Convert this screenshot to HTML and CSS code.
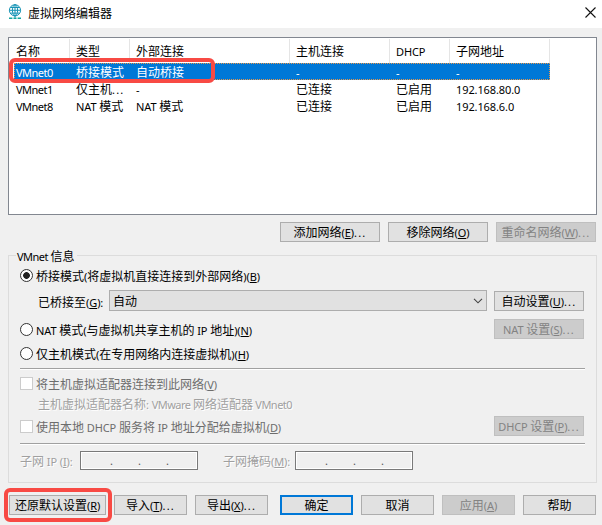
FILE: index.html
```html
<!DOCTYPE html>
<html lang="zh-CN">
<head>
<meta charset="utf-8">
<title>虚拟网络编辑器</title>
<link rel="stylesheet" href="styles.css">
</head>
<body>
<header class="titlebar">
  <svg class="globe" width="14" height="16" viewBox="0 0 14 16" fill="none" stroke="#1593b5" stroke-width="1">
    <circle cx="7" cy="6.3" r="5.6"/><ellipse cx="7" cy="6.3" rx="2.6" ry="5.6"/>
    <path d="M1.4 6.3h11.2M2.3 3.5h9.4M2.3 9.1h9.4M7 .7v13"/>
    <path d="M1 14.3h3.4M5.5 14.3h3M9.6 14.3H13" stroke="#12a6a0" stroke-width="1.4"/>
  </svg>
  <h1>虚拟网络编辑器</h1>
  <svg class="close" width="11" height="11" viewBox="0 0 11 11" stroke="#111" stroke-width="1.1"><path d="M.5.5l10 10M10.5.5l-10 10"/></svg>
</header>
<main>
  <section class="list">
    <div class="row head"><span>名称</span><span>类型</span><span>外部连接</span><span>主机连接</span><span><i>DHCP</i></span><span>子网地址</span></div>
    <div class="row selected"><span><i class="vm">VMnet0</i></span><span>桥接模式</span><span>自动桥接</span><span><i>-</i></span><span><i>-</i></span><span><i>-</i></span></div>
    <div class="row"><span><i class="vm">VMnet1</i></span><span>仅主机<i class="dots">...</i></span><span><i>-</i></span><span>已连接</span><span>已启用</span><span><i>192.168.80.0</i></span></div>
    <div class="row"><span><i class="vm">VMnet8</i></span><span><i>NAT </i>模式</span><span><i>NAT </i>模式</span><span>已连接</span><span>已启用</span><span><i>192.168.6.0</i></span></div>
  </section>
  <div class="list-actions">
    <button>添加网络<i>(<u>E</u>)<b>...</b></i></button>
    <button>移除网络<i>(<u>O</u>)</i></button>
    <button disabled>重命名网络<i>(<u>W</u>)<b>...</b></i></button>
  </div>
  <fieldset>
    <legend><i class="vm">VMnet </i>信息</legend>
    <div class="line r1"><span class="radio on"></span><label>桥接模式<i>(</i>将虚拟机直接连接到外部网络<i>)(<u>B</u>)</i></label></div>
    <div class="line r2"><label class="bridge">已桥接至<i>(<u>G</u>):</i></label>
      <div class="select">自动<svg width="10" height="6" viewBox="0 0 10 6" fill="none" stroke="#444" stroke-width="1.1"><path d="M1 .8l4 4 4-4"/></svg></div>
      <button>自动设置<i>(<u>U</u>)<b>...</b></i></button></div>
    <div class="line r3"><span class="radio"></span><label><i>NAT </i>模式<i>(</i>与虚拟机共享主机的<i> IP </i>地址<i>)(<u>N</u>)</i></label><button disabled><i>NAT </i>设置<i>(<u>S</u>)<b>...</b></i></button></div>
    <div class="line r4"><span class="radio"></span><label>仅主机模式<i>(</i>在专用网络内连接虚拟机<i>)(<u>H</u>)</i></label></div>
    <hr class="first">
    <div class="line r5"><span class="check"></span><label class="dim">将主机虚拟适配器连接到此网络<i>(<u>V</u>)</i></label></div>
    <div class="line r6 off"><label>主机虚拟适配器名称<i>: </i><i class="vm">VMware </i>网络适配器<i class="vm"> VMnet0</i></label></div>
    <div class="line r7"><span class="check"></span><label class="dim">使用本地<i> DHCP </i>服务将<i> IP </i>地址分配给虚拟机<i>(<u>D</u>)</i></label><button disabled><i>DHCP </i>设置<i>(<u>P</u>)<b>...</b></i></button></div>
    <hr>
    <div class="line r8 off"><label class="subnet">子网<i> IP (<u>I</u>):</i></label><div class="ip"><i>.</i><i>.</i><i>.</i></div><label class="mask">子网掩码<i>(<u>M</u>):</i></label><div class="ip"><i>.</i><i>.</i><i>.</i></div></div>
  </fieldset>
  <footer>
    <button class="restore">还原默认设置<i>(<u>R</u>)</i></button>
    <button>导入<i>(<u>T</u>)<b>...</b></i></button>
    <button>导出<i>(<u>X</u>)<b>...</b></i></button>
    <button class="primary">确定</button>
    <button>取消</button>
    <button disabled>应用<i>(<u>A</u>)</i></button>
    <button>帮助</button>
  </footer>
</main>
</body>
</html>
```
FILE: styles.css
```css
*, *::after { box-sizing: border-box; }
body {
  margin: 0;
  width: 602px;
  height: 525px;
  overflow: hidden;
  background: #f0f0f0;
  color: #000;
  font: 12px/17px "Noto Sans CJK SC", sans-serif;
}
i { font: 11px/1 "Noto Sans", sans-serif; letter-spacing: -0.1px; }
b { font-weight: normal; letter-spacing: 1.2px; }
u { text-underline-offset: 1px; text-decoration-thickness: 1px; }
.vm { letter-spacing: -0.5px; }
.dots { letter-spacing: 1.2px; }
i, label, legend { white-space: pre; }

.titlebar { display: flex; align-items: center; height: 28px; padding: 0 6px 4px 8px; background: #fff; }
h1 { flex: 1; margin: 0 0 0 6px; font-size: 12px; font-weight: normal; }
main { display: flex; flex-direction: column; padding: 9px 5px 0 8px; }

.list { height: 178px; border: 1px solid #828790; background: #fff; }
.row {
  position: relative;
  display: grid;
  grid-template-columns: 56px 60px 160px 100px 60px 100px;
  width: 536px;
  height: 17px;
  margin-left: 5px;
}
.row span { padding-left: 2px; white-space: nowrap; line-height: 17px; }
.row span + span { padding-left: 6px; }
.head { height: 25px; padding-top: 1px; }
.head span { line-height: 24px; border-right: 1px solid #e5e5e5; }
.selected { background: #0078d7; color: #fff; outline: 1px dotted #e8964a; outline-offset: -1px; }
.selected::after, .restore::after {
  content: "";
  position: absolute;
  border: 4px solid #f84a44;
  border-radius: 6px;
}
.selected::after { left: -5px; top: -5px; width: 206px; height: 25px; }

button {
  position: relative;
  width: 73px;
  height: 20px;
  padding: 0;
  border: 1px solid #adadad;
  border-radius: 0;
  background: #e1e1e1;
  color: #000;
  font: inherit;
  line-height: 18px;
  text-align: center;
  white-space: pre;
}
button:disabled { border-color: #bfbfbf; background: #ccc; color: #838383; }
.list-actions { display: flex; justify-content: flex-end; gap: 8px; margin: 7px 1px 0 0; }
.list-actions button { width: 100px; }

fieldset { height: 235px; margin: 6px 0 0; padding: 0 12px 0 11px; border: 1px solid #dcdcdc; }
legend { height: 15px; margin-left: -4px; padding: 0 3px 0 1px; line-height: 15px; }
.line { display: flex; align-items: center; }
.line > button { width: 90px; margin-left: auto; }
.r1 { height: 25px; }
.r2 { height: 26px; padding-left: 18px; }
.r3 { height: 30px; }
.r4 { height: 19px; }
.r5 { height: 27px; }
.r6 { height: 12px; padding-left: 18px; }
.r7 { height: 34px; }
.r8 { height: 30px; }
.radio { flex: none; width: 13px; height: 13px; margin-right: 3px; border: 1px solid #333; border-radius: 50%; background: #fff; }
.on { background: radial-gradient(circle, #222 3px, #fff 3.7px); }
.check { flex: none; width: 13px; height: 13px; margin-right: 3px; border: 1px solid #ccc; background: #fff; }
.bridge { width: 71px; }
.select {
  display: flex;
  align-items: center;
  justify-content: space-between;
  width: 378px;
  height: 21px;
  margin-top: -1px;
  padding: 0 3px;
  border: 1px solid #adadad;
  background: #e1e1e1;
}
hr { height: 2px; margin: 0 -1px 0 0; border: 0; border-top: 1px solid #a0a0a0; border-bottom: 1px solid #fff; }
.first { margin-top: 5px; }
.dim { color: #6d6d6d; }
.off { color: #a0a0a0; text-shadow: 1px 1px #fff; }
.subnet { width: 60px; }
.mask { width: 72px; margin-left: 25px; }
.ip { display: flex; gap: 25px; width: 118px; height: 19px; padding-left: 29px; border: 1px solid #7a7a7a; box-shadow: inset 0 0 0 1px #fff; color: #555; text-shadow: none; }
.ip i { width: 3px; line-height: 17px; }

footer { display: flex; gap: 8px; margin: 12px 0 0 1px; }
footer .restore { width: 97px; }
.restore::after { left: -6px; top: -8px; width: 108px; height: 34px; }
.primary { margin-left: 4px; border: 2px solid #0078d7; line-height: 16px; }
```
